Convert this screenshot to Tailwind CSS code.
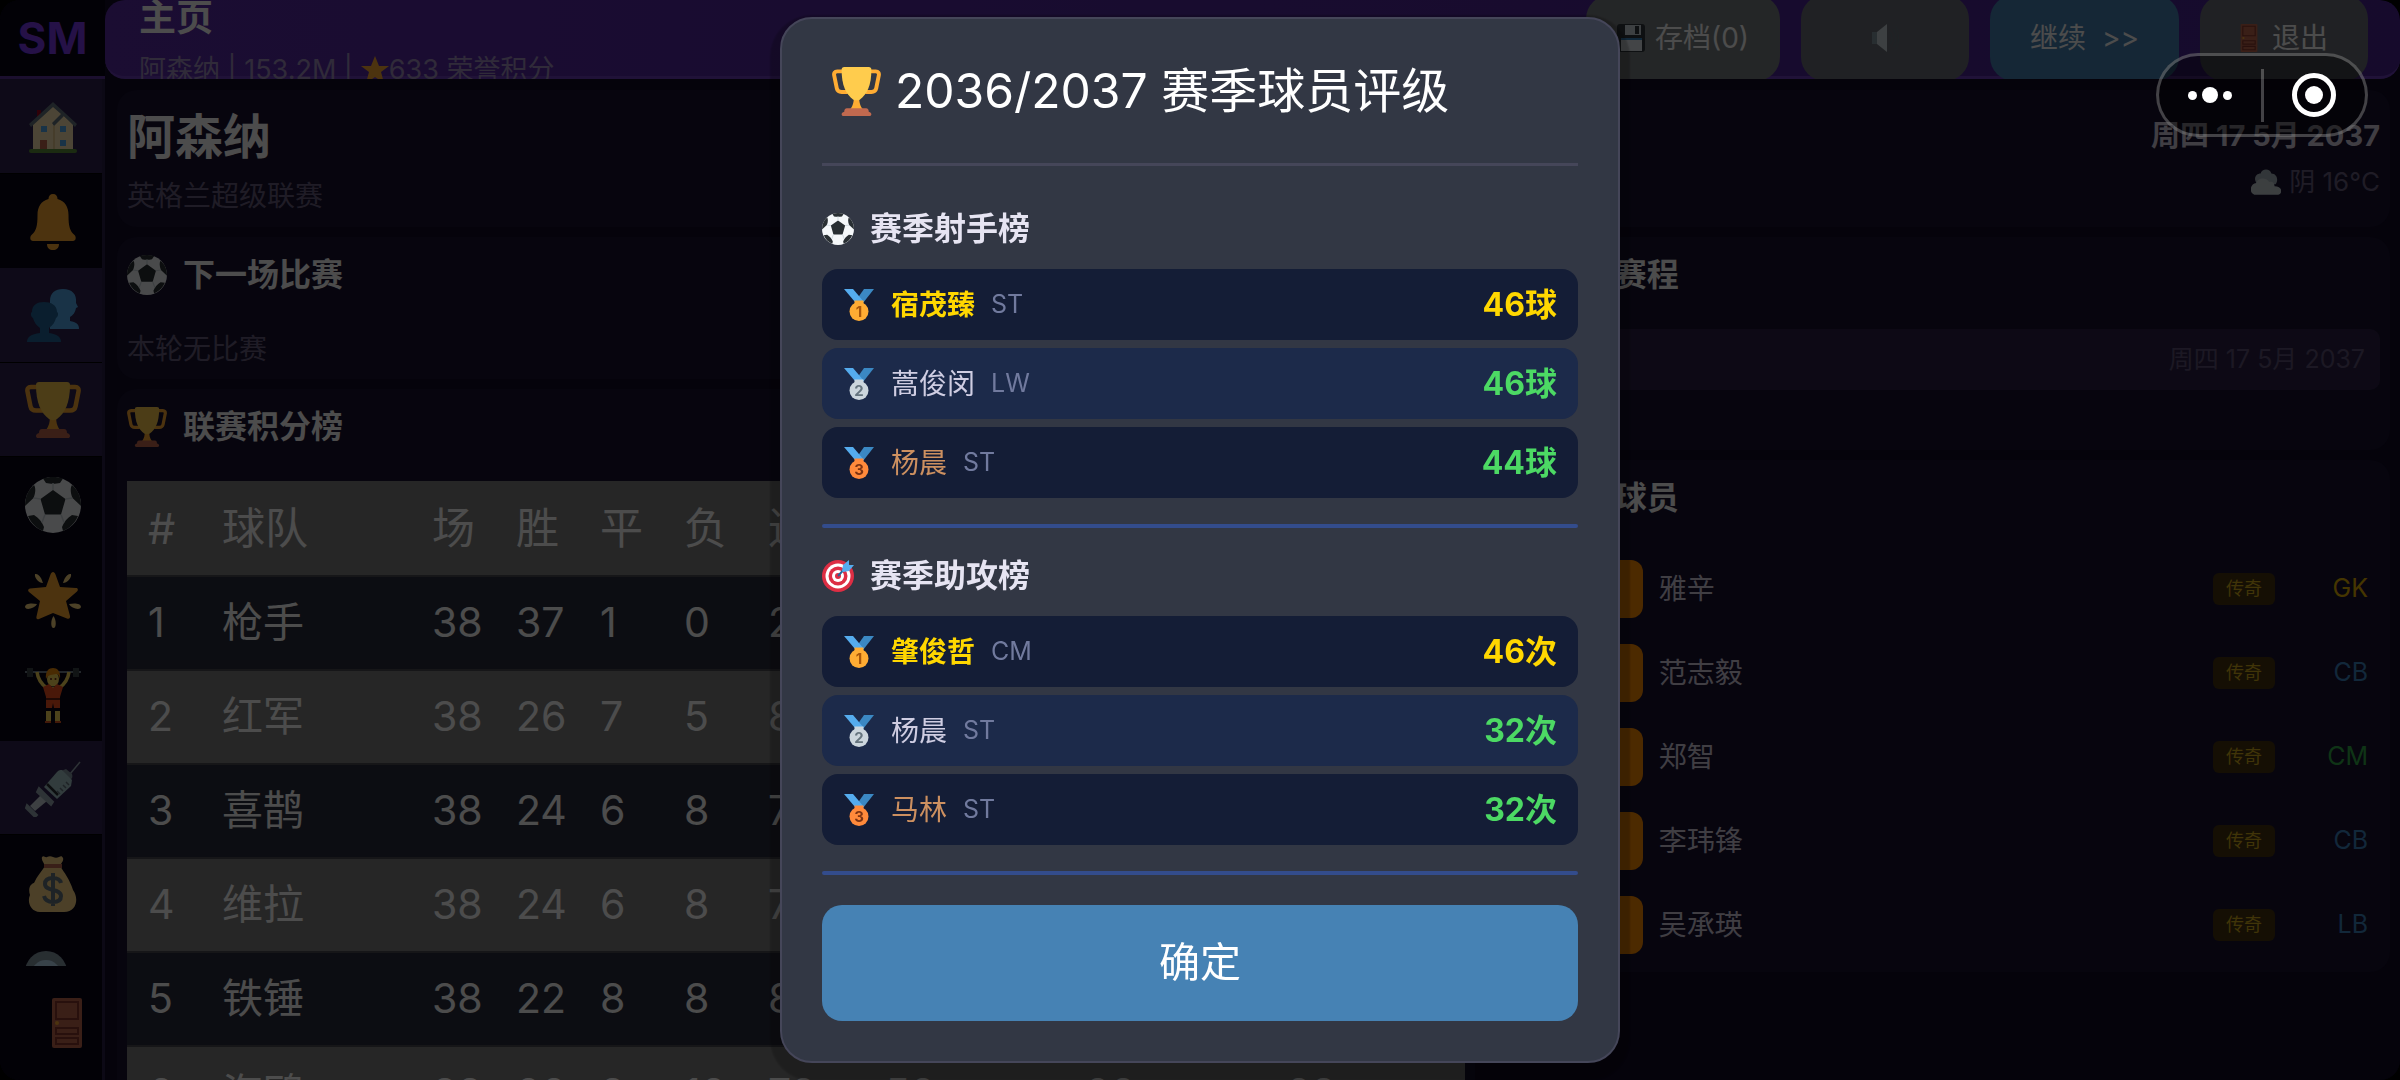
<!DOCTYPE html>
<html lang="zh-CN">
<head>
  <meta charset="UTF-8" />
  <meta name="viewport" content="width=device-width, initial-scale=1.0" />
  <title>SM - 主页</title>
  <script src="https://cdn.jsdelivr.net/npm/@tailwindcss/browser@4"></script>
</head>
<body class="h-screen overflow-hidden bg-black text-white font-['Inter','Noto_Sans_CJK_SC',sans-serif]">

  <!-- Icons -->
  <svg class="hidden" aria-hidden="true">
    <symbol id="i-trophy" viewBox="0 0 56 56">
      <path d="M13 5H6c-3 0-4 2-3.500 4.500l3 15C6 27 8 28.500 11 28.500h7M43 5h7c3 0 4 2 3.500 4.500l-3 15C50 27 48 28.500 45 28.500h-7" fill="none" stroke="#ffac33" stroke-width="4.500"/>
      <path d="M25 33h6c0 7 1 11 4 15H21c3-4 4-8 4-15z" fill="#ffac33"/>
      <path d="M11 3c0-2 1-3 3-3h28c2 0 3 1 3 3 0 18-5 28-13 34-2 1.500-6 1.500-8 0C16 31 11 21 11 3z" fill="#ffcc4d"/>
      <path d="M17 47h22c2 0 3 1.500 3 4 2 .5 3 1.500 3 3 0 1.500-1 2-2 2H13c-1 0-2-.5-2-2 0-1.500 1-2.500 3-3 0-2.500 1-4 3-4z" fill="#c1694f"/>
    </symbol>
    <symbol id="i-ball" viewBox="0 0 56 56">
      <circle cx="28" cy="28" r="28" fill="#f5f8fa"/>
      <path d="M28 13l12.500 9-4.500 15.500H20L15.500 22zM18 1.500C24-.5 32-.5 38 1.500L35 6c-4 1-10 1-14 0zM9 8c2 3 1.500 8-.5 13L0 29C0 20 3 13 9 8zM47 8c-2 3-1.500 8 .5 13l8.500 8c0-9-3-16-9-21zM3 39l6-1c5 3 8 7 10 12l-1 4C11 51 6 46 3 39zM53 39l-6-1c-5 3-8 7-10 12l1 4c7-3 12-8 15-15z" fill="#292f33"/>
      <path d="M28 13V6M40.500 22l7-1M36 37.500l3 8M20 37.500l-3 8M15.500 22l-7-1" stroke="#ccd6dd" stroke-width="1.500"/>
    </symbol>
    <symbol id="i-house" viewBox="0 -3 56 56">
      <path d="M12 8h4v10h-4z" fill="#a0041e"/>
      <path d="M28 3L8 22v26h40V22L39 14z" fill="#ffe8b6"/>
      <path d="M29 24v24" stroke="#d9b46a"/>
      <path d="M28 0L4 22l2 3L28 5l8 7-9 9 2 3 10-10 11 11 2-3z" fill="#66757f"/>
      <path d="M16 24h6v6h-6zM35 24h6v6h-6zM35 38h6v6h-6z" fill="#55acee"/>
      <path d="M15 38h7v10h-7z" fill="#c1694f"/>
      <rect x="4" y="47" width="48" height="4" rx="2" fill="#5c913b"/>
    </symbol>
    <symbol id="i-bell" viewBox="0 0 56 56">
      <path d="M28 0c3 0 4.500 2 4.500 5C40 7 43.500 13 43.500 21c0 12 1.500 16 6 20 2 2 1.500 6-1.500 6H8c-3 0-3.500-4-1.500-6 4.500-4 6-8 6-20 0-8 3.500-14 11-16 0-3 1.500-5 4.500-5zM22 50h12c0 4-2.500 6-6 6s-6-2-6-6z" fill="#ffac33"/>
    </symbol>
    <symbol id="i-people" viewBox="0 0 56 56">
      <path d="M25 41V13C25 5 30 1 38 1c9 0 14 5 13 14l2 4-2 1c-1 5-3 7-6 9v4c6 1 9 3 9 8z" fill="#55acee"/>
      <path d="M2 54c0-5 4-8 13-9v-5c-4-3-6-6-7-10-2-1-3-5-1-6 0-7 5-10 12-10s13 3 13 10c2 1 1 5-1 6-1 4-3 7-7 10v5c8 1 12 4 12 9z" fill="#226699"/>
    </symbol>
    <symbol id="i-star" viewBox="0 0 56 56">
      <path d="M28 0c1 0 2 1 2.500 2.500L35 15l16 1c2 0 2.500 2 1 3.500L41 29l4 15c.5 2-1 3.500-3 2.500L28 41l-14 6c-2 1-3-.5-2.500-2.500L15 29 4 20c-1.500-1.500-1-3 1-3.500L21 15l4.500-12.500C26 1 27 0 28 0z" fill="#ffac33"/>
      <path d="M10 2c4-1 7 5 8 9-4 0-9-5-8-9zM46 2c-4-1-7 5-8 9 4 0 9-5 8-9zM0 35c0-4 7-4 12-3-2 4-11 7-12 3zM56 35c0-4-7-4-12-3 2 4 11 7 12 3zM28.500 44c3 4 3 12 0 12s-3-8 0-12z" fill="#ffd983"/>
    </symbol>
    <symbol id="i-lift" viewBox="0 0 56 56">
      <path d="M0 5h56" stroke="#99aab5" stroke-width="1.500"/>
      <path d="M2 1h6v9H2zM48 1h6v9h-6z" fill="#3b4348"/>
      <path d="M12 5c1 8 4 12 10 16M44 5c-1 8-4 12-10 16" fill="none" stroke="#ffdc5d" stroke-width="3.500"/>
      <path d="M24 20h8v4h-8zM21 44h5v11h-5zM30 44h5v11h-5z" fill="#ffdc5d"/>
      <ellipse cx="28" cy="12" rx="6" ry="7.500" fill="#ffdc5d"/>
      <path d="M21 12c-1-8 3-11 7-11s8 3 7 11c-1-4-2-5-4-5-3 1-8 0-10 5z" fill="#f4900c"/>
      <circle cx="26" cy="12" r="1" fill="#662113"/><circle cx="30.500" cy="12" r="1" fill="#662113"/>
      <path d="M18 20l6-3 4 4 4-4 6 3-3 10v11h-6l-1-5-1 5h-6V30z" fill="#f4521e"/>
      <path d="M21 32h14" stroke="#662113" stroke-width="2"/>
      <path d="M20 54h6v2h-6zM30 54h6v2h-6z" fill="#dd551f"/>
    </symbol>
    <symbol id="i-syringe" viewBox="0 0 56 56">
      <path d="M55 1L45 13" stroke="#99aab5" stroke-width="1.500"/>
      <path d="M41 8l6 5c1 3 0 5-2 6l-9-9z" fill="#8899a6"/>
      <path d="M37 9l10 10-1 6-14 13-13-12L32 11c2-2 3-2 5-2z" fill="#a8c8cc"/>
      <path d="M22 23l11 11" stroke="#292f33" stroke-width="2.500"/>
      <path d="M35 33l-3-3M38 30l-3-3M41 27l-3-3M44 24l-3-3" stroke="#66757f" stroke-width="1.500"/>
      <path d="M16 34l6 6L10 50l-5-5z" fill="#ccd6dd"/>
      <path d="M14 27l14 14-2 3L12 31zM2 44l10 10-2 2L1 47z" fill="#99aab5" stroke="#99aab5" stroke-width="2"/>
    </symbol>
    <symbol id="i-money" viewBox="0 0 56 56">
      <path d="M17 1c2-2 3 1 5 0s4-1 6 0 4 1 6 0 3-1 4 1c1 3-2 5-3 8 4 6 10 14 13 24 6 8 4 22-9 22H15C5 56 2 45 5 39c-2-6 0-11 4-12 3-7 8-12 11-17-1-3-4-6-3-9z" fill="#fdd888"/>
      <path d="M19 8h18v4H19z" fill="#bf6952"/>
      <path d="M36 27c-1-4-4-5-8-5-5 0-8 2-8 6 0 8 16 4 16 12 0 4-3 6-8 6s-8-2-9-6M28 17v33" fill="none" stroke="#67757f" stroke-width="4"/>
    </symbol>
    <symbol id="i-search" viewBox="0 0 56 56">
      <path d="M36 34l18 18-4 4-18-18z" fill="#66757f"/>
      <circle cx="21" cy="22" r="21" fill="#8899a6"/><circle cx="21" cy="25" r="15" fill="#bbddf5"/>
    </symbol>
    <symbol id="i-door" viewBox="0 0 30 50">
      <rect width="30" height="50" rx="2" fill="#c1694f"/>
      <path d="M4 4h22v17H4zM4 30h22v6H4zM4 40h22v6H4z" fill="#c1694f" stroke="#88382d" stroke-width="2"/>
      <circle cx="5" cy="25" r="2" fill="#ffac33"/>
    </symbol>
    <symbol id="i-floppy" viewBox="0 0 28 28">
      <rect width="28" height="28" rx="3" fill="#31373d"/>
      <path d="M8 1h16v10H8z" fill="#ccd6dd"/><path d="M18 2h4v8h-4z" fill="#31373d"/>
      <path d="M4 14h21v13H4z" fill="#e1e8ed"/><path d="M4 14h21v2H4z" fill="#3b88c3"/>
    </symbol>
    <symbol id="i-sound" viewBox="0 0 28 28">
      <path d="M1 8h7v12H1z" fill="#8899a6"/><path d="M16 0v28L6 20V8z" fill="#ccd6dd"/>
      <path d="M19 8q4 6 0 12M22 5q6 9 0 18M25 2q5 12 0 24" fill="none" stroke="#66757f"/>
    </symbol>
    <symbol id="i-cloud" viewBox="0 0 28 24">
      <path d="M5 13C2 8 5 4 9 4c1-5 9-5 10 0 5 0 7 6 4 10z" fill="#a9b6be"/>
      <path d="M5 24c-7 0-7-10 0-11 1-5 9-6 12-1 3-1 5 1 5 4 8 0 8 8 2 8z" fill="#c8d2d8"/>
    </symbol>
    <symbol id="i-honor" viewBox="0 0 28 28">
      <path d="M14 0l4 10h10l-8 6 3 11-9-6-9 6 3-11-8-6h10z" fill="#ffac33"/>
    </symbol>
    <symbol id="i-ribbon" viewBox="0 0 32 32">
      <path d="M21 0h10L20 14l-6-4z" fill="#3b88c3"/><path d="M1 0h9l11 13H12z" fill="#55acee"/>
      <path d="M11.500 11.500h9v4h-9z" fill="currentColor"/><circle cx="16" cy="22.500" r="9.500" fill="currentColor"/>
    </symbol>
    <symbol id="i-target" viewBox="0 0 32 32">
      <circle cx="16" cy="16" r="16" fill="#dd2e44"/><circle cx="16" cy="16" r="12.500" fill="#fff"/>
      <circle cx="16" cy="16" r="9.500" fill="#dd2e44"/><circle cx="16" cy="16" r="6" fill="#fff"/><circle cx="16" cy="16" r="3" fill="#dd2e44"/>
      <path d="M16 16L26 5" stroke="#269" stroke-width="2"/>
      <path d="M20 11l1-6 6-5v5h5l-5 6-6 1z" fill="#55acee"/>
    </symbol>
  </svg>

  <div class="flex h-full overflow-hidden rounded-[20px] bg-[#110a25]">

    <!-- Sidebar -->
    <aside class="flex w-[105px] shrink-0 flex-col bg-[#070417]">
      <div class="flex h-[79px] shrink-0 items-center justify-center border-b-[3px] border-[#5a3299] text-[44px] font-bold text-[#7c3aed]">SM</div>
      <nav class="min-h-0 flex-1 overflow-hidden border-r-[3px] border-[#281f48]">
        <ul id="navList" class="grid h-[851px] grid-rows-9"></ul>
        <a href="#" aria-label="球探" class="block pt-5 pl-1"><svg class="mx-auto size-14"><use href="#i-search"/></svg></a>
      </nav>
      <a href="#" aria-label="退出" class="flex h-[114px] shrink-0 justify-end border-r-[3px] border-[#281f48] pt-8 pr-5"><svg class="h-[50px] w-[30px]"><use href="#i-door"/></svg></a>
    </aside>

    <div class="flex min-w-0 flex-1 flex-col">
      <header class="flex h-[79px] shrink-0 items-center justify-between rounded-[20px] border-b-[3px] border-[#6d3cbc] bg-linear-to-r from-[#5a2ca8] to-[#4a2494] pr-8 pl-[34px]">
        <div class="mt-[10px]">
          <h1 class="text-[37px] leading-[54px] font-bold">主页</h1>
          <p class="flex items-center text-[27px] leading-[50px] text-[#a08fc0]">阿森纳 | 153.2M | <svg class="ml-2 size-7"><use href="#i-honor"/></svg>633 荣誉积分</p>
        </div>
        <div class="flex gap-[21px] text-[28px]">
          <button class="flex h-[86px] w-[194px] items-center justify-center gap-[10px] rounded-3xl bg-[#7b7f82]"><svg class="size-7"><use href="#i-floppy"/></svg>存档(0)</button>
          <button aria-label="声音" class="flex h-[86px] w-[168px] items-center justify-center rounded-3xl bg-[#6c7178]"><svg class="size-7"><use href="#i-sound"/></svg></button>
          <button class="flex h-[86px] w-[189px] items-center justify-center gap-4 rounded-3xl bg-[#4682b4]">继续 <span>&gt;&gt;</span></button>
          <button class="flex h-[86px] w-[168px] items-center justify-center gap-[14px] rounded-3xl bg-[#6c7178]"><svg class="h-7 w-[18px]"><use href="#i-door"/></svg>退出</button>
        </div>
      </header>

      <main class="relative flex flex-1 flex-col gap-[10px] bg-[#110a25] pt-[11px] pr-[10px] pl-3">
        <section class="flex h-[137px] shrink-0 justify-between rounded-[20px] bg-[#181230] px-[10px]">
          <div>
            <h2 class="mt-4 text-[48px] leading-[62px] font-bold">阿森纳</h2>
            <p class="text-[28px] leading-[56px] text-[#6a6080]">英格兰超级联赛</p>
          </div>
          <div class="text-right">
            <p class="mt-6 text-[29px] leading-[44px] font-bold text-[#d5cfe0]">周四 17 5月 2037</p>
            <p class="flex items-center justify-end gap-2 text-[26px] leading-[48px] text-[#6a6080]"><svg class="h-[26px] w-[30px]"><use href="#i-cloud"/></svg>阴 16°C</p>
          </div>
        </section>

        <div class="grid grid-cols-[3fr_2fr] gap-[10px]">
          <div class="flex min-w-0 flex-col gap-[10px]">
            <section class="rounded-[20px] bg-[#181230] p-[10px]">
              <h2 class="mb-[26px] flex h-14 items-center gap-4 text-[32px] font-bold"><svg class="size-10"><use href="#i-ball"/></svg>下一场比赛</h2>
              <p class="text-[28px] leading-[40px] text-[#6a6080]">本轮无比赛</p>
            </section>
            <section class="rounded-[20px] bg-[#181230] p-[10px]">
              <h2 class="mb-[26px] flex h-14 items-center gap-4 text-[32px] font-bold"><svg class="size-10"><use href="#i-trophy"/></svg>联赛积分榜</h2>
              <table class="w-full table-fixed border-collapse text-left text-[41px]">
                <thead>
                  <tr class="h-[95px] bg-[#808080] text-[43px]">
                    <th class="w-[74px] pl-[21px] font-normal">#</th>
                    <th class="w-[210px] pl-[21px] font-normal">球队</th>
                    <th class="w-[84px] pl-[21px] font-normal">场</th>
                    <th class="w-[84px] pl-[21px] font-normal">胜</th>
                    <th class="w-[84px] pl-[21px] font-normal">平</th>
                    <th class="w-[84px] pl-[21px] font-normal">负</th>
                    <th class="w-[117px] pl-[21px] font-normal">进</th>
                    <th class="pl-[21px] font-normal">失</th>
                    <th class="pl-[21px] font-normal">净</th>
                    <th class="pl-[21px] font-normal">积分</th>
                  </tr>
                </thead>
                <tbody id="tableBody"></tbody>
              </table>
            </section>
          </div>

          <div class="flex min-w-0 flex-col gap-[10px]">
            <section class="h-[213px] rounded-[20px] bg-[#181230] p-[10px]">
              <h2 class="mb-[26px] flex h-14 items-center gap-4 text-[32px] font-bold"><svg class="size-10"><use href="#i-ball"/></svg>近期赛程</h2>
              <p class="h-[61px] rounded-[10px] bg-[#2c2146] pr-[15px] text-right text-[25px] leading-[61px] text-[#5f5378]">周四 17 5月 2037</p>
            </section>
            <section class="rounded-[20px] bg-[#181230] px-[10px] pt-[10px] pb-[5px]">
              <h2 class="mb-[21px] flex h-14 items-center gap-4 text-[32px] font-bold"><svg class="size-10"><use href="#i-star"/></svg>明星球员</h2>
              <ul id="playerList"></ul>
            </section>
          </div>
        </div>
      </main>
    </div>
  </div>

  <!-- Season rating dialog -->
  <div class="fixed inset-0 flex items-center justify-center bg-black/70">
    <div role="dialog" aria-labelledby="dialogTitle" class="w-[840px] max-w-full rounded-[32px] border-2 border-[#454659] bg-[#323744] px-10 pb-10 shadow-[0_8px_2px_10px_rgba(0,0,0,0.22)]">
      <h2 id="dialogTitle" class="flex h-[147px] items-center gap-[14px] border-b-[3px] border-[#454659] pl-[10px] text-[48px]"><svg class="size-[49px]"><use href="#i-trophy"/></svg>2036/2037 赛季球员评级</h2>

      <section class="mt-[39px]">
        <h3 class="mb-4 flex h-12 items-center gap-4 text-[32px] font-bold text-[#e6e4f2]"><svg class="size-8"><use href="#i-ball"/></svg>赛季射手榜</h3>
        <ol id="scorerList" class="flex flex-col gap-2"></ol>
        <hr class="mt-[26px] h-1 rounded-full border-0 bg-[#334c8c]" />
      </section>

      <section class="mt-6">
        <h3 class="mb-4 flex h-12 items-center gap-4 text-[32px] font-bold text-[#e6e4f2]"><svg class="size-8"><use href="#i-target"/></svg>赛季助攻榜</h3>
        <ol id="assistList" class="flex flex-col gap-2"></ol>
        <hr class="mt-[26px] h-1 rounded-full border-0 bg-[#334c8c]" />
      </section>

      <button class="mt-[30px] h-[116px] w-full rounded-[20px] bg-[#4682b4] text-[41px]">确定</button>
    </div>
  </div>

  <!-- Mini program capsule -->
  <div class="fixed top-[53px] right-8 flex h-[84px] w-[212px] items-center rounded-full border-[3px] border-white/25 bg-black/40">
    <button aria-label="更多" class="flex h-full flex-1 items-center justify-center gap-[5px]">
      <span class="size-[9px] rounded-full bg-white"></span><span class="size-4 rounded-full bg-white"></span><span class="size-[9px] rounded-full bg-white"></span>
    </button>
    <span class="h-[53px] w-[3px] bg-white/25"></span>
    <button aria-label="关闭" class="flex h-full flex-1 items-center justify-center">
      <span class="flex size-11 items-center justify-center rounded-full border-[5px] border-white"><span class="size-[18px] rounded-full bg-white"></span></span>
    </button>
  </div>

  <script>
    // [icon, label, highlighted]
    const nav = [
      ['house', '主页', true], ['bell', '消息', false], ['people', '球队', true],
      ['trophy', '联赛', true], ['ball', '比赛', false], ['star', '球星', false],
      ['lift', '训练', false], ['syringe', '伤病', true], ['money', '财务', false],
    ];
    document.getElementById('navList').innerHTML = nav.map(([icon, label, lit]) => `
      <li class="${lit ? 'bg-[#2f2350] border-b border-black' : ''}">
        <a href="#" aria-label="${label}" class="flex h-full items-center justify-center pt-[2px] pl-1"><svg class="size-14"><use href="#i-${icon}"/></svg></a>
      </li>`).join('');

    const standings = [
      [1, '枪手', 38, 37, 1, 0, 214, 18, 196, 112],
      [2, '红军', 38, 26, 7, 5, 88, 40, 48, 85],
      [3, '喜鹊', 38, 24, 6, 8, 79, 41, 38, 78],
      [4, '维拉', 38, 24, 6, 8, 76, 45, 31, 78],
      [5, '铁锤', 38, 22, 8, 8, 80, 49, 31, 74],
      [6, '海鸥', 38, 20, 8, 10, 70, 50, 20, 68],
    ];
    document.getElementById('tableBody').innerHTML = standings.map((row, i) => `
      <tr class="h-[94px] border-t-2 border-[#4a4a50] ${i % 2 ? 'bg-[#808080]' : 'bg-[#2b2d3c]'}">
        ${row.map(v => `<td class="pl-[21px] whitespace-nowrap">${v}</td>`).join('')}
      </tr>`).join('');

    const players = [
      ['雅辛', 'GK', 'text-[#e6b400]'], ['范志毅', 'CB', 'text-[#3e86c4]'], ['郑智', 'CM', 'text-[#34b04a]'],
      ['李玮锋', 'CB', 'text-[#3e86c4]'], ['吴承瑛', 'LB', 'text-[#3e86c4]'],
    ];
    document.getElementById('playerList').innerHTML = players.map(([name, pos, color]) => `
      <li class="flex h-[84px] items-center pr-3">
        <span class="ml-[90px] h-[58px] w-[58px] rounded-xl bg-[#ff8c00]"></span>
        <span class="ml-4 flex-1 text-[28px] text-[#d5cfe0]">${name}</span>
        <span class="h-8 w-[62px] rounded-md bg-[#46340f] text-center text-[18px] leading-8 text-[#d8ae1c]">传奇</span>
        <span class="w-[93px] text-right text-[25px] ${color}">${pos}</span>
      </li>`).join('');

    const medals = ['text-[#ffac33]', 'text-[#ccd6dd]', 'text-[#ff8a3b]'];
    const digits = ['text-[#a8560a]', 'text-[#66757f]', 'text-[#7c3312]'];
    const names = ['font-bold text-[#ffd700]', 'text-[#cfcde2]', 'text-[#cd9060]'];

    function renderRanking(id, unit, rows) {
      document.getElementById(id).innerHTML = rows.map(([name, pos, count], i) => `
        <li class="flex h-[71px] items-center rounded-2xl px-[21px] ${i === 1 ? 'bg-[#1c2a4a]' : 'bg-[#141d36]'}">
          <span class="relative size-8 ${medals[i]}">
            <svg class="size-8"><use href="#i-ribbon"/></svg>
            <b class="absolute inset-x-0 top-[14px] text-center text-[15px] leading-[18px] ${digits[i]}">${i + 1}</b>
          </span>
          <span class="ml-4 text-[28px] ${names[i]}">${name}</span>
          <span class="ml-4 flex-1 text-[25px] text-[#717a9e]">${pos}</span>
          <span class="text-[32px] font-bold ${i === 0 ? 'text-[#ffd700]' : 'text-[#4cd964]'}">${count}${unit}</span>
        </li>`).join('');
    }
    renderRanking('scorerList', '球', [['宿茂臻', 'ST', 46], ['蒿俊闵', 'LW', 46], ['杨晨', 'ST', 44]]);
    renderRanking('assistList', '次', [['肇俊哲', 'CM', 46], ['杨晨', 'ST', 32], ['马林', 'ST', 32]]);
  </script>

</body>
</html>
